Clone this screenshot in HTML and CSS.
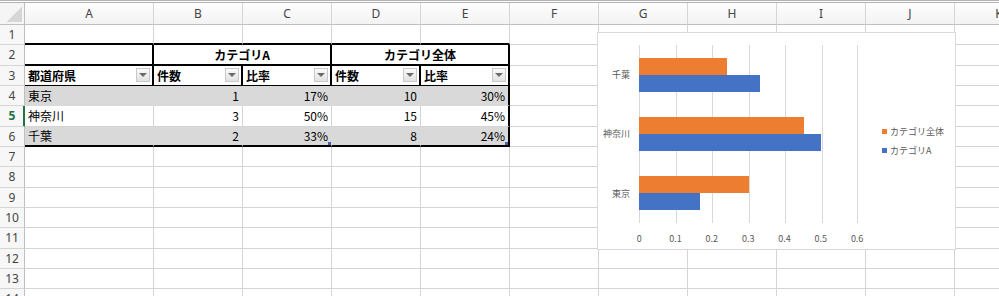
FILE: index.html
```html
<!DOCTYPE html>
<html lang="ja">
<head>
  <meta charset="UTF-8">
  <title>都道府県別 集計</title>
  <link rel="stylesheet" href="styles.css">
</head>
<body>
  <div class="wrap">
    <div class="sheet">
      <!-- 列見出し -->
      <div class="corner"></div>
      <div class="ch">A</div><div class="ch">B</div><div class="ch">C</div><div class="ch">D</div><div class="ch">E</div>
      <div class="ch">F</div><div class="ch">G</div><div class="ch">H</div><div class="ch">I</div><div class="ch">J</div><div class="ch">K</div>

      <!-- 1 -->
      <div class="rh">1</div>
      <div class="c top"></div><div class="c top"></div><div class="c top"></div><div class="c top"></div><div class="c top"></div>
      <div class="c"></div><div class="c"></div><div class="c"></div><div class="c"></div><div class="c"></div><div class="c"></div>

      <!-- 2 -->
      <div class="rh">2</div>
      <div class="c grp"></div>
      <div class="c grp span2">カテゴリA</div>
      <div class="c grp span2">カテゴリ全体</div>
      <div class="c"></div><div class="c"></div><div class="c"></div><div class="c"></div><div class="c"></div><div class="c"></div>

      <!-- 3 -->
      <div class="rh">3</div>
      <div class="c th">都道府県<span class="filter"></span></div>
      <div class="c th">件数<span class="filter"></span></div>
      <div class="c th">比率<span class="filter"></span></div>
      <div class="c th">件数<span class="filter"></span></div>
      <div class="c th">比率<span class="filter"></span></div>
      <div class="c"></div><div class="c"></div><div class="c"></div><div class="c"></div><div class="c"></div><div class="c"></div>

      <!-- 4 -->
      <div class="rh">4</div>
      <div class="c band">東京</div>
      <div class="c band num">1</div>
      <div class="c band num">17%</div>
      <div class="c band num">10</div>
      <div class="c band num end">30%</div>
      <div class="c"></div><div class="c"></div><div class="c"></div><div class="c"></div><div class="c"></div><div class="c"></div>

      <!-- 5 -->
      <div class="rh on">5</div>
      <div class="c">神奈川</div>
      <div class="c num">3</div>
      <div class="c num">50%</div>
      <div class="c num">15</div>
      <div class="c num end">45%</div>
      <div class="c"></div><div class="c"></div><div class="c"></div><div class="c"></div><div class="c"></div><div class="c"></div>

      <!-- 6 -->
      <div class="rh">6</div>
      <div class="c band last">千葉</div>
      <div class="c band num last">2</div>
      <div class="c band num last handle">33%</div>
      <div class="c band num last">8</div>
      <div class="c band num last end handle">24%</div>
      <div class="c"></div><div class="c"></div><div class="c"></div><div class="c"></div><div class="c"></div><div class="c"></div>

      <!-- 7-14 -->
      <div class="rh">7</div>
      <div class="c"></div><div class="c"></div><div class="c"></div><div class="c"></div><div class="c"></div><div class="c"></div><div class="c"></div><div class="c"></div><div class="c"></div><div class="c"></div><div class="c"></div>
      <div class="rh">8</div>
      <div class="c"></div><div class="c"></div><div class="c"></div><div class="c"></div><div class="c"></div><div class="c"></div><div class="c"></div><div class="c"></div><div class="c"></div><div class="c"></div><div class="c"></div>
      <div class="rh">9</div>
      <div class="c"></div><div class="c"></div><div class="c"></div><div class="c"></div><div class="c"></div><div class="c"></div><div class="c"></div><div class="c"></div><div class="c"></div><div class="c"></div><div class="c"></div>
      <div class="rh">10</div>
      <div class="c"></div><div class="c"></div><div class="c"></div><div class="c"></div><div class="c"></div><div class="c"></div><div class="c"></div><div class="c"></div><div class="c"></div><div class="c"></div><div class="c"></div>
      <div class="rh">11</div>
      <div class="c"></div><div class="c"></div><div class="c"></div><div class="c"></div><div class="c"></div><div class="c"></div><div class="c"></div><div class="c"></div><div class="c"></div><div class="c"></div><div class="c"></div>
      <div class="rh">12</div>
      <div class="c"></div><div class="c"></div><div class="c"></div><div class="c"></div><div class="c"></div><div class="c"></div><div class="c"></div><div class="c"></div><div class="c"></div><div class="c"></div><div class="c"></div>
      <div class="rh">13</div>
      <div class="c"></div><div class="c"></div><div class="c"></div><div class="c"></div><div class="c"></div><div class="c"></div><div class="c"></div><div class="c"></div><div class="c"></div><div class="c"></div><div class="c"></div>
      <div class="rh">14</div>
      <div class="c"></div><div class="c"></div><div class="c"></div><div class="c"></div><div class="c"></div><div class="c"></div><div class="c"></div><div class="c"></div><div class="c"></div><div class="c"></div><div class="c"></div>
    </div>

    <!-- グラフ -->
    <div class="chart">
      <div class="cats">
        <span>千葉</span>
        <span>神奈川</span>
        <span>東京</span>
      </div>
      <div class="plot">
        <div class="lines"><i></i><i></i><i></i><i></i><i></i><i></i></div>
        <div class="group">
          <div class="bar all" style="width:40.4%"></div>
          <div class="bar cat-a" style="width:55.56%"></div>
        </div>
        <div class="group">
          <div class="bar all" style="width:75.76%"></div>
          <div class="bar cat-a" style="width:83.33%"></div>
        </div>
        <div class="group">
          <div class="bar all" style="width:50.51%"></div>
          <div class="bar cat-a" style="width:27.78%"></div>
        </div>
      </div>
      <div class="legend">
        <div class="key"><span class="sw all"></span>カテゴリ全体</div>
        <div class="key"><span class="sw cat-a"></span>カテゴリA</div>
      </div>
      <div class="axis">
        <span>0</span><span>0.1</span><span>0.2</span><span>0.3</span><span>0.4</span><span>0.5</span><span>0.6</span>
      </div>
    </div>
  </div>
</body>
</html>
```

FILE: styles.css
```css
* {
  box-sizing: border-box;
}
body {
  margin: 0;
  background: #fff;
  overflow: hidden;
  font-family: "Noto Sans CJK JP", sans-serif;
  color: #000;
}
.wrap {
  position: relative;
  width: 999px;
  height: 296px;
  overflow: hidden;
}

/* シート */
.sheet {
  display: grid;
  grid-template-columns: 25px 129px repeat(10, 89px);
  grid-template-rows: 22px repeat(14, 20.33px);
  border-top: 3px double #b3b3b3;
  font-size: 12px;
}
.corner {
  border-right: 1px solid #bfbfbf;
  border-bottom: 1px solid #bfbfbf;
  background:
    linear-gradient(to bottom right, transparent 50%, #d6d6d6 50%) right 2px bottom 2px / 15px 16px no-repeat,
    #f5f5f5;
}
.ch {
  display: flex;
  align-items: center;
  justify-content: center;
  background: linear-gradient(#fdfdfd, #f3f3f3);
  border-right: 1px solid #d5d5d5;
  border-bottom: 1px solid #bfbfbf;
  font-family: "Noto Sans", sans-serif;
  font-size: 12px;
  color: #444;
}
.rh {
  display: flex;
  align-items: center;
  justify-content: center;
  background: #f7f7f7;
  border-right: 1px solid #bfbfbf;
  border-bottom: 1px solid #d5d5d5;
  font-family: "Noto Sans", sans-serif;
  font-size: 12px;
  color: #444;
}
.rh.on {
  color: #217346;
  font-weight: 700;
  border-right-color: #217346;
  box-shadow: inset -1px 0 #217346;
}
.c {
  display: flex;
  align-items: center;
  min-width: 0;
  padding: 0 3px;
  white-space: nowrap;
  overflow: hidden;
  border-right: 1px solid #d4d4d4;
  border-bottom: 1px solid #d4d4d4;
}

/* テーブル */
.c.top {
  border-bottom: 2px solid #000;
}
.c.grp {
  justify-content: center;
  font-weight: 700;
  border-right: 2px solid #000;
  border-bottom: 2px solid #000;
}
.span2 {
  grid-column: span 2;
}
.c.th {
  font-weight: 700;
  padding-right: 2px;
  border-right: 2px solid #000;
  border-bottom: 1px solid #000;
}
.filter {
  flex: none;
  margin-left: auto;
  width: 14px;
  height: 14px;
  display: flex;
  align-items: center;
  justify-content: center;
  border: 1px solid #c9c9c9;
  background: linear-gradient(#fafafa, #e2e2e2);
}
.filter::before {
  content: "";
  border-left: 4px solid transparent;
  border-right: 4px solid transparent;
  border-top: 4px solid #6b6b6b;
}
.c.band {
  background: #d9d9d9;
  border-right-color: transparent;
  border-bottom-color: transparent;
}
.c.num {
  justify-content: flex-end;
}
.c.end {
  border-right: 2px solid #000;
}
.c.last {
  border-bottom: 2px solid #000;
}
.c.handle {
  position: relative;
}
.c.handle::after {
  content: "";
  position: absolute;
  right: 0;
  bottom: 0;
  width: 3px;
  height: 3px;
  background: #4a5fb5;
}

/* グラフ */
.chart {
  position: absolute;
  left: 597px;
  top: 32px;
  width: 359px;
  height: 218px;
  background: #fff;
  border: 1px solid #d9d9d9;
  display: grid;
  grid-template-columns: 41px 219px 1fr;
  grid-template-rows: 12px 178px auto 1fr;
  font-size: 9px;
  color: #595959;
}
.cats {
  grid-column: 1;
  grid-row: 2;
  display: flex;
  flex-direction: column;
}
.cats span {
  flex: 1;
  display: flex;
  align-items: center;
  justify-content: flex-end;
  padding-right: 9px;
}
.plot {
  grid-column: 2;
  grid-row: 2;
  position: relative;
  display: flex;
  flex-direction: column;
  padding-right: 1px;
}
.lines {
  position: absolute;
  inset: 0;
  display: grid;
  grid-template-columns: repeat(6, 1fr);
}
.lines i {
  border-left: 1px solid #d9d9d9;
}
.lines i:last-child {
  border-right: 1px solid #d9d9d9;
}
.group {
  position: relative;
  flex: 1;
  display: flex;
  flex-direction: column;
  justify-content: center;
}
.bar {
  height: 17px;
}
.all {
  background: #ed7d31;
}
.cat-a {
  background: #4472c4;
}
.legend {
  grid-column: 3;
  grid-row: 2;
  align-self: start;
  margin-top: 77px;
  padding-left: 24px;
  line-height: 19px;
}
.key {
  display: flex;
  align-items: center;
  gap: 3px;
  white-space: nowrap;
}
.sw {
  width: 5px;
  height: 5px;
}
.axis {
  grid-column: 2;
  grid-row: 3;
  display: flex;
  margin-left: -18px;
  margin-top: 10px;
  line-height: 12px;
}
.axis span {
  flex: none;
  width: 36.33px;
  text-align: center;
}
```
